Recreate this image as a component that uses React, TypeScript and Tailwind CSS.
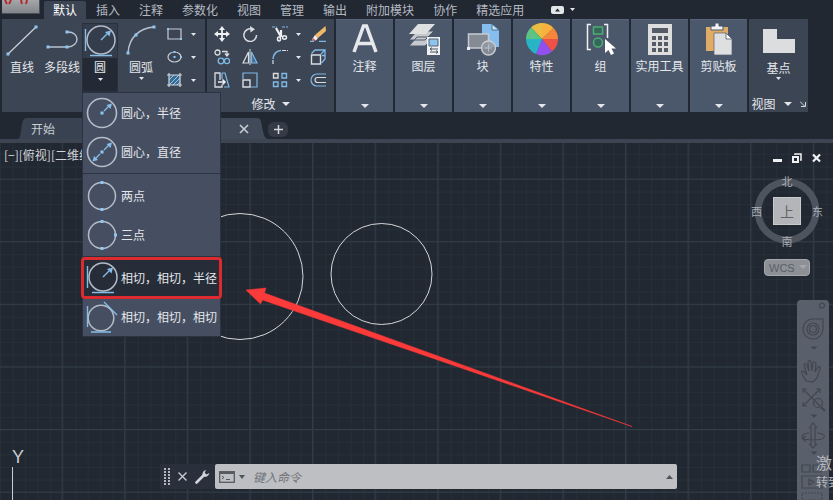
import React from 'react';

const tabs = ['默认', '插入', '注释', '参数化', '视图', '管理', '输出', '附加模块', '协作', '精选应用'];

function Caret({ small }: { small?: boolean }) {
  return (
    <svg width={small ? 5 : 8} height={small ? 3 : 4} viewBox="0 0 8 4" preserveAspectRatio="none" aria-hidden="true">
      <path d="M0 0h8L4 4z" fill="#e3e6ea" />
    </svg>
  );
}

function Dot({ x, y }: { x: number; y: number }) {
  return <rect x={x - 1.5} y={y - 1.5} width="3" height="3" fill="#8fc7f2" />;
}

type CircleKind = 'radius' | 'diameter' | 'two' | 'three' | 'ttr' | 'ttt';

function CircleIcon({ kind }: { kind: CircleKind }) {
  const blue = '#86bde8';
  return (
    <svg width="34" height="34" viewBox="0 0 34 34" fill="none" aria-hidden="true">
      {(kind === 'radius' || kind === 'diameter') && <circle cx="17" cy="17" r="14.5" stroke="#b4bcc8" strokeWidth="1.6" />}
      {kind === 'radius' && (
        <>
          <Dot x={17} y={17} />
          <path d="M19 15l6-6" stroke={blue} strokeWidth="1.3" />
          <path d="M27 7.500l-1.500 5.500-4-4z" fill={blue} />
        </>
      )}
      {kind === 'diameter' && (
        <>
          <Dot x={17} y={17} />
          <path d="M19 15l6-6M15 19l-6 6" stroke={blue} strokeWidth="1.3" />
          <path d="M27 7.500l-1.500 5.500-4-4zM7.500 26.500l1.500-5.500 4 4z" fill={blue} />
        </>
      )}
      {(kind === 'two' || kind === 'three') && (
        <>
          <circle cx="17" cy="17" r="13.5" stroke="#b4bcc8" strokeWidth="1.5" />
          <Dot x={17} y={3.5} />
          <Dot x={17} y={30.5} />
          {kind === 'three' && <Dot x={30.5} y={17} />}
        </>
      )}
      {kind === 'ttr' && (
        <>
          <circle cx="18" cy="16" r="14" stroke="#b4bcc8" strokeWidth="1.5" />
          <path d="M2.500 5v22M7 31.500h22M18 16l6-6" stroke={blue} strokeWidth="1.4" />
          <path d="M28 6.500l-1.500 6-4.500-4.500z" fill={blue} />
        </>
      )}
      {kind === 'ttt' && (
        <>
          <circle cx="16" cy="18" r="12.800" stroke="#b4bcc8" strokeWidth="1.5" />
          <path d="M2.500 6v21M6 32h20M19 2l13 13" stroke={blue} strokeWidth="1.4" />
        </>
      )}
    </svg>
  );
}

function MenuItem({ kind, label, active }: { kind: CircleKind; label: string; active?: boolean }) {
  return (
    <button
      role="menuitem"
      className={
        active
          ? 'flex h-[38px] items-center gap-0.5 rounded-xs bg-[#262d38] pl-0.5 text-left outline-3 -outline-offset-1 outline-[#dd2a2e]'
          : 'flex h-[39px] items-center gap-0.5 pl-0.5 text-left'
      }
    >
      <CircleIcon kind={kind} />
      <span className="whitespace-nowrap">{label}</span>
    </button>
  );
}

function CircleMenu() {
  return (
    <div role="menu" className="absolute left-0 top-full z-20 flex w-[139px] flex-col border border-[#2b3340] bg-[#464f61]">
      <MenuItem kind="radius" label="圆心，半径" />
      <MenuItem kind="diameter" label="圆心，直径" />
      <hr className="my-0.5 border-[#2c3542]" />
      <MenuItem kind="two" label="两点" />
      <MenuItem kind="three" label="三点" />
      <hr className="my-0.5 border-[#2c3542]" />
      <MenuItem kind="ttr" label="相切，相切，半径" active />
      <MenuItem kind="ttt" label="相切，相切，相切" />
    </div>
  );
}

function DrawPanel() {
  return (
    <section className="flex w-[203px] shrink-0 bg-[#3c4554] pt-1">
      <button className="flex w-10 flex-col items-center">
        <svg width="34" height="34" viewBox="0 0 34 34" aria-hidden="true">
          <path d="M3 31L31 4" stroke="#cdd2d9" strokeWidth="1.2" />
          <Dot x={3} y={31} />
          <Dot x={31} y={4} />
        </svg>
        <span className="leading-5">直线</span>
      </button>
      <button className="flex w-10 flex-col items-center whitespace-nowrap">
        <svg width="34" height="34" viewBox="0 0 34 34" fill="none" aria-hidden="true">
          <path d="M3 24h20c12-1 12-15 0-15" stroke="#b7c3d0" strokeWidth="1.4" />
          <Dot x={3} y={24} />
          <Dot x={22} y={24} />
          <Dot x={22} y={9} />
        </svg>
        <span className="leading-5">多段线</span>
      </button>
      <div className="relative h-[69px] w-9">
        <button className="flex h-full w-full flex-col items-center border border-[#29313d] bg-[#343d4b]" aria-haspopup="menu">
          <CircleIcon kind="ttr" />
          <span className="flex w-full flex-1 flex-col items-center gap-0.5 bg-[#232a35] leading-[18px]">
            圆
            <Caret small />
          </span>
        </button>
        <CircleMenu />
      </div>
      <button className="flex w-[46px] flex-col items-center">
        <svg width="34" height="34" viewBox="0 0 34 34" fill="none" aria-hidden="true">
          <path d="M4 30C5 14 16 5 30 4" stroke="#b7c3d0" strokeWidth="1.4" />
          <Dot x={4} y={30} />
          <Dot x={12} y={12} />
          <Dot x={30} y={4} />
        </svg>
        <span className="leading-5">圆弧</span>
        <Caret small />
      </button>
      <div className="flex flex-col gap-[7px] pl-0.5 pt-[3px]">
        <button className="flex items-center gap-2" aria-label="矩形">
          <svg width="17" height="16" viewBox="0 0 17 16" fill="none" aria-hidden="true">
            <path d="M2 3h13v10H2z" stroke="#c6ccd4" strokeWidth="1.2" />
            <path d="M1 2h2v2H1zM14 12h2v2h-2z" fill="#8fc7f2" />
          </svg>
          <Caret small />
        </button>
        <button className="flex items-center gap-2" aria-label="椭圆">
          <svg width="17" height="16" viewBox="0 0 17 16" fill="none" aria-hidden="true">
            <ellipse cx="8.5" cy="8" rx="6.5" ry="5" stroke="#c6ccd4" strokeWidth="1.2" />
            <path d="M7.500 7h2v2h-2zM7.500 2h2v2h-2zM14 7h2v2h-2z" fill="#8fc7f2" />
          </svg>
          <Caret small />
        </button>
        <button className="flex items-center gap-2" aria-label="图案填充">
          <svg width="17" height="16" viewBox="0 0 17 16" fill="none" aria-hidden="true">
            <path d="M3 3h11v10H3z" fill="#3c6a91" />
            <path d="M3 8l5-5M3 13L13 3M7 13l7-7M11 13l3-3" stroke="#8fc7f2" />
            <path d="M1 3h15M1 13h15M3 1v14M14 1v14" stroke="#d3d8de" strokeWidth="1.2" />
          </svg>
          <Caret small />
        </button>
      </div>
    </section>
  );
}

const W = '#d9dde2';
const B = '#7fb9e6';

const modifyTools = [
  {
    label: '移动',
    art: (
      <>
        <path d="M8 2v12M2 8h12" stroke="#eef0f2" strokeWidth="1.8" />
        <path d="M8 0l3 4H5zM8 16l3-4H5zM0 8l4-3v6zM16 8l-4-3v6z" fill="#eef0f2" />
      </>
    ),
  },
  {
    label: '旋转',
    art: (
      <>
        <path d="M10 3.100A6.300 6.300 0 1 0 14.500 9" stroke={W} strokeWidth="1.500" />
        <path d="M8 0l5 3.200L8.500 6.500z" fill={W} />
      </>
    ),
  },
  {
    label: '修剪',
    menu: true,
    art: (
      <>
        <path d="M0 1h5M10 1h6" stroke={B} strokeWidth="1.200" strokeDasharray="3 1" />
        <path d="M4 2l5 9M9 4v7" stroke="#eef0f2" strokeWidth="2.200" />
        <ellipse cx="7" cy="13" rx="1.500" ry="2" stroke="#eef0f2" strokeWidth="1.500" />
        <ellipse cx="12.500" cy="11.500" rx="2" ry="1.700" stroke="#eef0f2" strokeWidth="1.500" />
      </>
    ),
  },
  {
    label: '删除',
    art: (
      <>
        <path d="M15.500 0L16 5l-8 7-3-3z" fill="#f0b869" />
        <path d="M5 9l3 3-2 2.500-4-1z" fill="#f1eee9" />
        <path d="M3 12l3 2.500-4 .5z" fill="#d7604e" />
        <path d="M0 15.300h4M9 15.300h7" stroke={B} strokeWidth="1.200" />
      </>
    ),
  },
  {
    label: '复制',
    art: (
      <>
        <circle cx="3.500" cy="3.500" r="2.500" stroke={W} strokeWidth="1.300" />
        <circle cx="7" cy="12" r="2.800" stroke={B} strokeWidth="1.300" />
        <circle cx="13" cy="12" r="2.600" stroke={B} strokeWidth="1.300" />
        <path d="M8 2.500h5v4M11 4.500l2 2.500 2-2.500" stroke={W} strokeWidth="1.300" />
      </>
    ),
  },
  {
    label: '镜像',
    art: (
      <>
        <path d="M6.500 3v11H1z" stroke={W} strokeWidth="1.200" />
        <path d="M9.500 3v11H15z" fill="#426e93" stroke={B} strokeWidth="1.200" />
        <path d="M8 0v16" stroke={W} />
      </>
    ),
  },
  {
    label: '圆角',
    menu: true,
    art: (
      <>
        <path d="M1 10C1 5 5 1.500 9 1.500" stroke={B} strokeWidth="1.500" />
        <path d="M1 11v5M10 1.500h6" stroke={W} strokeWidth="1.200" strokeDasharray="4 1" />
      </>
    ),
  },
  {
    label: '分解',
    art: (
      <>
        <path d="M1.500 6h9v9h-9z" stroke={W} strokeWidth="1.400" />
        <path d="M1.500 4.500L5 1h10v9l-3.500 4M11 5l4-4M12 6.500h2.500" stroke={B} strokeWidth="1.300" />
      </>
    ),
  },
  {
    label: '拉伸',
    art: (
      <>
        <path d="M8 12.500V15H1V1h5v7" stroke={W} strokeWidth="1.300" />
        <path d="M8 1h3l4 14h-5M8 1v6" stroke={B} strokeWidth="1.200" />
        <path d="M4 10h7M8.500 7.500L11 10l-2.500 2.500" stroke="#eef0f2" strokeWidth="1.500" />
      </>
    ),
  },
  {
    label: '缩放',
    art: (
      <>
        <path d="M1 7V1h14v14H8.500" stroke={B} strokeWidth="1.200" />
        <path d="M1 8h7v7H1z" stroke={W} strokeWidth="1.400" />
      </>
    ),
  },
  {
    label: '阵列',
    menu: true,
    art: (
      <>
        <path d="M1.500 1.500H6V6H1.500z" stroke={W} strokeWidth="1.400" />
        <path d="M1.500 10H6v4.500H1.500zM10 1.500h4.500V6H10zM10 10h4.500v4.500H10z" stroke={B} strokeWidth="1.400" />
      </>
    ),
  },
  {
    label: '偏移',
    art: (
      <>
        <path d="M16 2H7a6 6 0 0 0 0 12h9" stroke={B} strokeWidth="1.200" />
        <path d="M16 5.500H7.500a2.500 2.500 0 0 0 0 5H16" stroke={W} strokeWidth="1.200" />
      </>
    ),
  },
];

function ModifyPanel() {
  return (
    <section className="flex w-[127px] shrink-0 flex-col items-center bg-[#3c4554] pt-[7px]">
      <div className="grid grid-cols-[28px_30px_38px_18px] gap-y-[7px]">
        {modifyTools.map((tool) => (
          <button key={tool.label} aria-label={tool.label} className="flex items-center gap-2">
            <svg width="16" height="16" viewBox="0 0 16 16" fill="none" aria-hidden="true">
              {tool.art}
            </svg>
            {tool.menu && <Caret small />}
          </button>
        ))}
      </div>
      <button className="mt-2 flex items-center gap-1.5 leading-4">
        修改
        <Caret />
      </button>
    </section>
  );
}

const panels = [
  {
    label: '注释',
    art: <path d="M5 29L14.500 3h3L27 29M9 20.500h14" stroke="#e6e8eb" strokeWidth="3.500" />,
  },
  {
    label: '图层',
    art: (
      <>
        <path d="M9 14L1 23h16l9-9zM9 8L1 17h16l9-9z" fill="#c6c9cd" stroke="#4b586b" />
        <path d="M10 1h17l-9 10H1z" fill="#dfe0e2" />
        <path d="M19 14h13v18H19z" fill="#eef0f1" />
        <path d="M21 16h9v7h-9z" fill="#8ec3ee" stroke="#55606e" />
        <path d="M22 26h8M24 24.500L22 26l2 1.500M22 29h8M28 27.500l2 1.500-2 1.500" stroke="#4c5663" />
      </>
    ),
  },
  {
    label: '块',
    art: (
      <>
        <path d="M15 1h10l7 6v17H15z" fill="#86bdec" />
        <path d="M25 1l7 6h-7z" fill="#c9e3f8" stroke="#46708f" />
        <path d="M1.500 11h20v14h-20z" fill="#858b94" stroke="#c6cacf" strokeWidth="1.500" />
        <circle cx="21.500" cy="25" r="7" fill="#9298a1" fillOpacity=".8" stroke="#cbced3" strokeWidth="1.300" />
        <path d="M18 25h7M21.500 21.500v7" stroke="#b8bdc4" />
        <path d="M0 24h3v3H0z" fill="#eef0f2" />
      </>
    ),
  },
  {
    label: '特性',
    art: (
      <>
        <path d="M16 16L5 4.500A16 16 0 0 1 16 0z" fill="#e8bd42" />
        <path d="M16 16V0a16 16 0 0 1 11.500 5z" fill="#f7b13c" />
        <path d="M16 16L27.500 5A16 16 0 0 1 32 16z" fill="#f7863b" />
        <path d="M16 16h16a16 16 0 0 1-6 12.500z" fill="#ee5147" />
        <path d="M16 16l10 12.500A16 16 0 0 1 10 31z" fill="#9150ed" />
        <path d="M16 16l-6 15A16 16 0 0 1 0 16z" fill="#27b4c6" />
        <path d="M16 16H0A16 16 0 0 1 5 4.500z" fill="#5cc383" />
      </>
    ),
  },
  {
    label: '组',
    art: (
      <>
        <path d="M6 1.500H2.500v25H6M19 1.500h3.500V15" stroke="#eef0f2" strokeWidth="1.500" />
        <path d="M8.500 4h9v7h-9z" fill="#36675a" stroke="#4aae74" strokeWidth="1.500" />
        <circle cx="13" cy="19.500" r="4.500" fill="#36675a" stroke="#4aae74" strokeWidth="1.500" />
        <path d="M20 16v14l3.500-3 2.500 5 3-1.500-2.500-5H31z" fill="#fff" />
      </>
    ),
  },
  {
    label: '实用工具',
    art: (
      <>
        <path d="M4 1h24v31H4z" fill="#dddddd" />
        <path d="M8 5h16v5H8zM8 13h4v4H8zM14 13h4v4h-4zM20 13h4v4h-4zM8 19h4v4H8zM14 19h4v4h-4zM20 19h4v4h-4zM8 25h4v4H8zM14 25h4v4h-4zM20 25h4v4h-4z" fill="#555b64" />
      </>
    ),
  },
  {
    label: '剪贴板',
    art: (
      <>
        <path d="M3 4h22v24H3z" fill="#dfab65" />
        <path d="M8 7V3h4V0h4v3h4v4z" fill="#f1f2f3" stroke="#4b586b" />
        <path d="M11 10h12l6 6v16H11z" fill="#dedfe1" stroke="#56606d" strokeWidth=".7" />
        <path d="M23 10l6 6h-6z" fill="#fff" stroke="#697482" />
      </>
    ),
  },
];

function Ribbon() {
  return (
    <div className="flex h-[93px] gap-0.5 pl-0.5 text-[#e4e7eb]">
      <DrawPanel />
      <ModifyPanel />
      {panels.map((panel) => (
        <button key={panel.label} className="flex w-[57px] shrink-0 flex-col items-center border-t border-[#57637a] bg-[#4b586b] pb-1 pt-[3px]">
          <svg width="32" height="33" viewBox="0 0 32 33" fill="none" aria-hidden="true">
            {panel.art}
          </svg>
          <span className="leading-5">{panel.label}</span>
          <span className="mt-auto">
            <Caret />
          </span>
        </button>
      ))}
      <section className="flex w-[59px] shrink-0 flex-col items-center bg-[#3c4554] pt-2.5">
        <button className="flex flex-col items-center">
          <svg width="32" height="24" viewBox="0 0 32 24" aria-hidden="true">
            <path d="M0 0h14v10h18v14H0z" fill="#dcdddf" />
          </svg>
          <span className="mt-1.5 leading-[18px]">基点</span>
          <Caret small />
        </button>
        <button className="mt-auto flex items-center gap-2 leading-4">
          视图
          <Caret />
          <svg width="6" height="6" viewBox="0 0 6 6" fill="none" aria-hidden="true">
            <path d="M0 .5l5 5M5.500 1v4.500H1" stroke="#d5d9de" />
          </svg>
        </button>
      </section>
    </div>
  );
}

function TabBar() {
  return (
    <header className="flex h-[19px] items-stretch">
      <button aria-label="应用程序菜单" className="ml-0.5 h-3.5 w-[38px] bg-linear-to-b from-[#a5a7aa] to-[#808388]">
        <svg width="38" height="14" viewBox="0 0 38 14" fill="none" aria-hidden="true">
          <path d="M3 0l2 4M9 0L7 4M19 0l1 4M25 0l-1 4" stroke="#b52b2b" strokeWidth="2" />
          <path d="M0 13.500h38M37.500 0v14" stroke="#4b4f56" />
        </svg>
      </button>
      <nav className="ml-1 flex gap-px text-[#b4bac2]">
        {tabs.map((tab, i) => (
          <button
            key={tab}
            className={i === 0 ? 'mt-px whitespace-nowrap rounded-t-xs bg-[#3c4554] px-[9px] text-white' : 'mt-px whitespace-nowrap px-[9px]'}
          >
            {tab}
          </button>
        ))}
      </nav>
      <button aria-label="最小化功能区" className="ml-[18px] flex items-center gap-1.5">
        <svg width="13" height="8" viewBox="0 0 13 8" aria-hidden="true">
          <rect width="13" height="8" rx="2" fill="#e3e6e9" />
          <path d="M4 5.500l2.500-3 2.500 3z" fill="#252b35" />
        </svg>
        <Caret small />
      </button>
    </header>
  );
}

function DocumentTabs() {
  return (
    <div className="mt-1.5 flex h-[25px] items-stretch border-b-4 border-[#3d4553] text-[#c9ced5]">
      <svg width="10" height="21" viewBox="0 0 10 21" className="ml-[17px]" aria-hidden="true">
        <path d="M10 0C5 0 5 6 4 13s-2 8-4 8h10z" fill="#394250" />
      </svg>
      <button className="w-[56px] bg-[#394250] pl-1 text-left">开始</button>
      <div className="flex w-[170px] items-center justify-end bg-[#414a59] pr-1">
        <button aria-label="关闭图形">
          <svg width="10" height="10" viewBox="0 0 10 10" aria-hidden="true">
            <path d="M1 1l8 8M9 1L1 9" stroke="#c4cad1" strokeWidth="1.700" />
          </svg>
        </button>
      </div>
      <svg width="15" height="21" viewBox="0 0 15 21" aria-hidden="true">
        <path d="M0 0h4c5 0 4 6 6 13 1 6 3 8 5 8H0z" fill="#414a59" />
      </svg>
      <button aria-label="新建选项卡" className="my-1 flex h-[15px] w-5 items-center justify-center rounded-md bg-[#343b47]">
        <svg width="9" height="9" viewBox="0 0 9 9" aria-hidden="true">
          <path d="M4.500 0v9M0 4.500h9" stroke="#d2d6db" strokeWidth="1.500" />
        </svg>
      </button>
    </div>
  );
}

function Drawing() {
  return (
    <svg className="absolute inset-0 h-full w-full" fill="none" aria-hidden="true">
      <defs>
        <pattern id="minor" width="12.520" height="12.520" patternUnits="userSpaceOnUse" y="-1.500">
          <path d="M0 .5h12.520M.5 0v12.520" stroke="#262f39" />
        </pattern>
        <pattern id="major" width="62.600" height="62.600" patternUnits="userSpaceOnUse" x="-1" y="-27">
          <path d="M0 .5h62.600M.5 0v62.600" stroke="#323d48" />
        </pattern>
      </defs>
      <rect width="100%" height="100%" fill="url(#minor)" />
      <rect width="100%" height="100%" fill="url(#major)" />
      <circle cx="240" cy="133.500" r="63" stroke="#d5d7d9" />
      <circle cx="381.500" cy="131" r="50.500" stroke="#d5d7d9" />
      <path d="M246 147l20-2-1.500 5L632 283.500 262.500 157l-2 4z" fill="#fb3a3a" stroke="#fb3a3a" strokeWidth=".5" />
    </svg>
  );
}

function ViewCube() {
  return (
    <div className="mr-2.5 mt-3 flex flex-col items-center text-[11px] leading-3 text-[#a9adb3]">
      <div className="relative flex size-[72px] flex-col items-center justify-between">
        <svg className="absolute inset-0" width="72" height="72" viewBox="0 0 72 72" fill="none" aria-hidden="true">
          <circle cx="36" cy="36" r="29" stroke="#4e545e" strokeWidth="7" />
        </svg>
        <span className="relative">北</span>
        <div className="relative flex w-full items-center justify-between">
          <span>西</span>
          <button className="size-7 border border-[#c8c9cb] bg-[#b4b5b8] text-sm leading-none text-[#62666c]">上</button>
          <span>东</span>
        </div>
        <span className="relative">南</span>
      </div>
      <button className="mt-3 flex h-[17px] w-[46px] items-center gap-1 rounded-sm border border-[#a4a7ab] bg-[#8d9095] pl-1 font-[Liberation_Sans,sans-serif] text-[#5a5e65]">
        WCS
        <svg width="8" height="5" viewBox="0 0 8 5" aria-hidden="true">
          <path d="M0 0h8L4 4z" fill="#a3a6aa" />
        </svg>
      </button>
    </div>
  );
}

function NavigationBar() {
  return (
    <nav aria-label="导航栏" className="mr-1 mt-6 w-8 flex-1 overflow-hidden rounded-t-sm bg-[#5a606b]">
      <svg width="32" height="200" viewBox="0 0 32 200" fill="none" stroke="#41464f" strokeWidth="1.200" aria-hidden="true">
        <circle cx="25" cy="5.500" r="2.500" />
        <path d="M16 19h10v10a10 10 0 1 1-10-10z" />
        <circle cx="16" cy="29" r="6" />
        <circle cx="16" cy="29" r="3.500" />
        <path d="M9 81c-2-5-6-8-4-10 2-1 4 3 5 4l-3-10c0-2 2-2 3 0l2 6-1-9c0-2 3-2 3 0l1 9 1-8c1-2 3-1 3 1l-1 8 3-5c2-1 3 0 2 2l-3 9-4 4z" />
        <path d="M6 89l17 17M23 89L6 106M6 93v-4h4M19 89h4v4M6 102v4h4" />
        <circle cx="21" cy="103" r="4.500" />
        <path d="M24 107l4 4" strokeWidth="2" />
        <path d="M14 145v-18M18 145v-18M12 128l4-5 4 5M12 144l4 4 4-4M12 133c-10 1-10 7 4 7s15-6 4-7M9 136l-4 2 4 4" />
        <path d="M5 165h8v7H5zM16 165h8v7h-8zM5 176h20v12H5zM12 179v6l5-3z" />
        <path d="M5 193h20v7H5z" strokeDasharray="2 1" />
        <path d="M15 47h4l-2 2zM15 115h4l-2 2zM15 152h4l-2 2z" fill="#41464f" />
      </svg>
    </nav>
  );
}

function CommandLine() {
  return (
    <form className="absolute bottom-[11px] left-[160px] right-[156px] flex h-[25px] items-stretch">
      <div className="flex w-[55px] items-center gap-2 bg-[#29303b] pl-1">
        <svg width="6" height="17" viewBox="0 0 6 17" aria-hidden="true">
          <path d="M1 0v17M5 0v17" stroke="#b3b8bf" strokeWidth="2" strokeDasharray="2 1" />
        </svg>
        <button type="button" aria-label="关闭命令行">
          <svg width="9" height="9" viewBox="0 0 9 9" aria-hidden="true">
            <path d="M.5 .5l8 8M8.500 .5l-8 8" stroke="#c6cacf" strokeWidth="1.400" />
          </svg>
        </button>
        <button type="button" aria-label="自定义">
          <svg width="15" height="15" viewBox="0 0 15 15" aria-hidden="true">
            <path d="M1.500 13.500L9 6" stroke="#d1d4d8" strokeWidth="2.600" strokeLinecap="round" />
            <path d="M11 1C7.500 2 7 5 8 7.500c2 1 5.500 0 6.500-3.500l-3 1.500-1.800-1.800z" fill="#d1d4d8" />
          </svg>
        </button>
      </div>
      <div className="flex min-w-0 flex-1 items-center gap-1 rounded-xs bg-[#bdbfc2] pl-1 pr-1">
        <svg width="16" height="12" viewBox="0 0 16 12" fill="none" aria-hidden="true">
          <rect x=".7" y=".7" width="14.600" height="10.600" stroke="#555a61" strokeWidth="1.300" />
          <path d="M1 2h14" stroke="#555a61" strokeWidth="2" />
          <path d="M3 5l2 1.500L3 8M7 8.500h4" stroke="#555a61" />
        </svg>
        <svg width="6" height="4" viewBox="0 0 6 4" aria-hidden="true">
          <path d="M0 0h6L3 4z" fill="#4f545b" />
        </svg>
        <input aria-label="命令" placeholder="键入命令" className="ml-1 min-w-0 flex-1 text-xs italic placeholder:text-[#6f7277]" />
        <button type="button" aria-label="命令历史">
          <svg width="7" height="4" viewBox="0 0 7 4" aria-hidden="true">
            <path d="M0 4h7L3.500 0z" fill="#4f545b" />
          </svg>
        </button>
      </div>
    </form>
  );
}

export default function App() {
  return (
    <div className="flex h-screen flex-col overflow-hidden bg-[#222832] font-['Noto_Sans_CJK_SC',sans-serif] text-xs">
      <TabBar />
      <Ribbon />
      <DocumentTabs />
      <main className="relative flex flex-1 justify-between overflow-hidden bg-[#212831]">
        <Drawing />
        <p className="relative pl-1 pt-1 text-[#d2d5d9]">[−][俯视][二维线框]</p>

        <div className="relative flex flex-col items-end">
          <div className="mr-3 mt-2.5 flex gap-2.5">
            <button aria-label="最小化">
              <svg width="9" height="10" viewBox="0 0 9 10" aria-hidden="true">
                <path d="M0 7.500h9" stroke="#f0f1f2" strokeWidth="3" />
              </svg>
            </button>
            <button aria-label="还原">
              <svg width="10" height="10" viewBox="0 0 10 10" fill="none" aria-hidden="true">
                <path d="M3 2V1h6v6H8" stroke="#f0f1f2" strokeWidth="1.500" />
                <path d="M1 4h5v5H1z" stroke="#f0f1f2" strokeWidth="2" />
              </svg>
            </button>
            <button aria-label="关闭">
              <svg width="9" height="10" viewBox="0 0 9 10" aria-hidden="true">
                <path d="M1 1.500l7 7M8 1.500l-7 7" stroke="#f0f1f2" strokeWidth="2.200" />
              </svg>
            </button>
          </div>
          <ViewCube />
          <NavigationBar />
        </div>

        {/* UCS axis marker */}
        <div className="absolute bottom-0 left-3 flex flex-col text-[#c9ccd0]">
          <span className="font-[Liberation_Sans,sans-serif] text-lg leading-5">Y</span>
          <span className="h-[33px] w-px bg-[#c9ccd0]" />
        </div>

        <CommandLine />

        <div className="absolute bottom-2.5 left-full -ml-[17px] flex flex-col gap-1 whitespace-nowrap text-[#b2b5ba]">
          <p className="text-base leading-4">激活</p>
          <p className="leading-4">转到</p>
        </div>
      </main>
    </div>
  );
}
